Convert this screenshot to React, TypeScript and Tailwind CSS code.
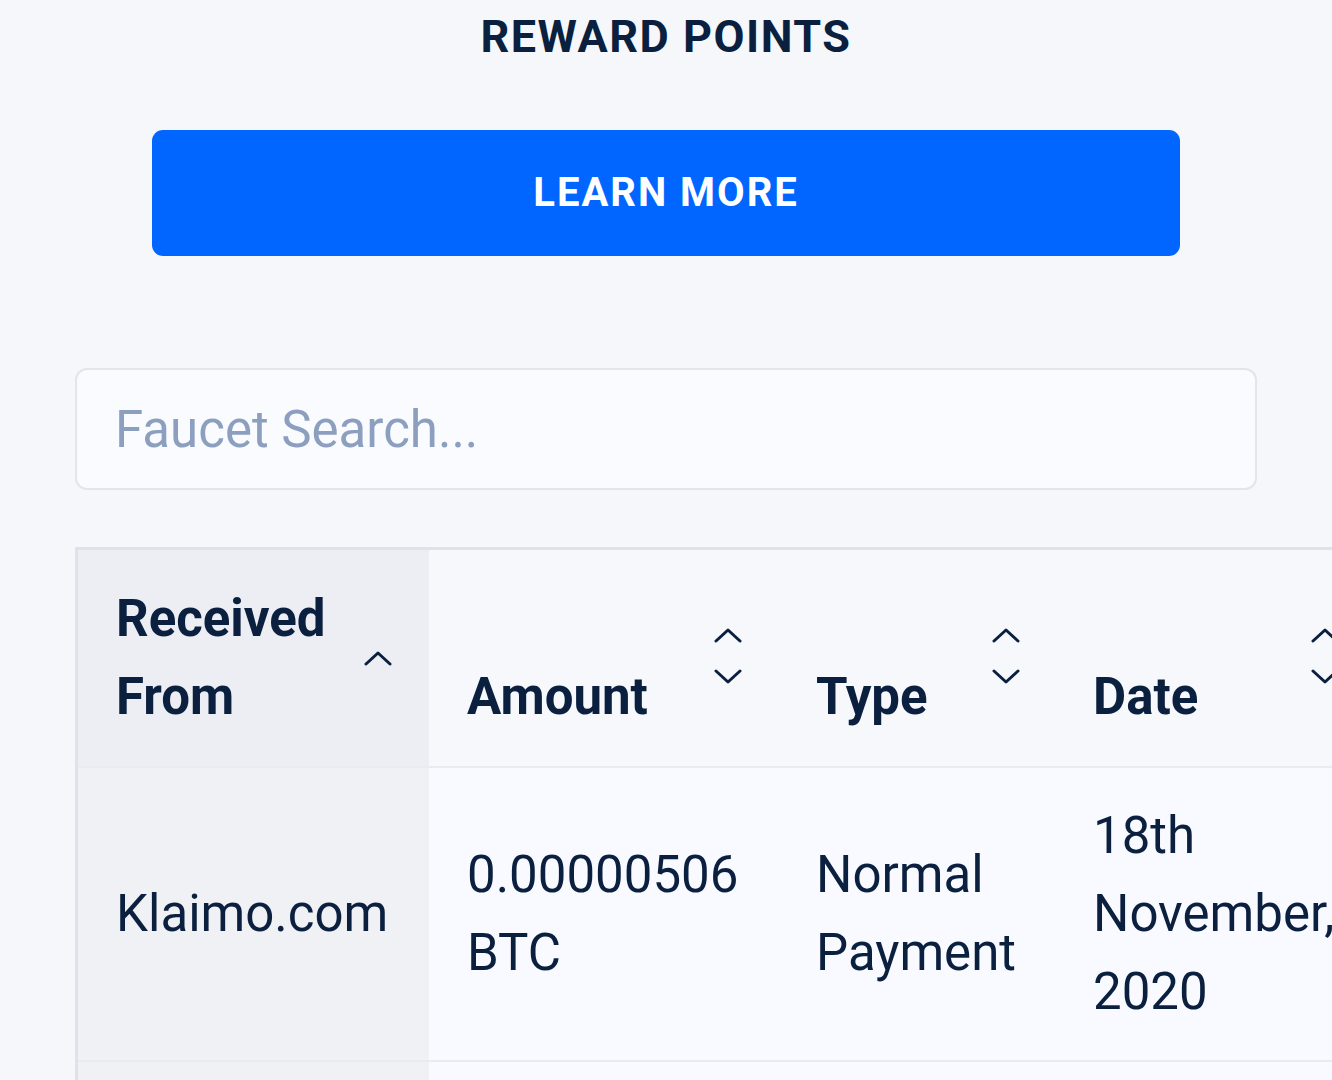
import React from 'react';

// Sortable column headers of the faucet table
const columns = [
  { key: 'from', label: 'Received From', width: 'w-[351px]', pr: 'pr-[37px]', sorted: true },
  { key: 'amount', label: 'Amount', width: 'w-[349px]', pr: 'pr-[36px]', sorted: false },
  { key: 'type', label: 'Type', width: 'w-[277px]', pr: 'pr-[35px]', sorted: false },
  { key: 'date', label: 'Date', width: 'w-[320px]', pr: 'pr-[36px]', sorted: false },
];

const rows = [
  { id: 1, from: 'Klaimo.com', amount: '0.00000506 BTC', type: 'Normal Payment', date: '18th November, 2020' },
  { id: 2, from: 'Klaimo.com', amount: '0.00000498 BTC', type: 'Normal Payment', date: '17th November, 2020' },
];

const ChevronUp = () => (
  <svg width="28" height="16" viewBox="0 0 28 16" fill="none" stroke="currentColor" strokeWidth={3} strokeLinecap="round" strokeLinejoin="round">
    <path d="M2 14L14 3l12 11" />
  </svg>
);

const ChevronDown = () => (
  <svg width="28" height="16" viewBox="0 0 28 16" fill="none" stroke="currentColor" strokeWidth={3} strokeLinecap="round" strokeLinejoin="round">
    <path d="M2 2l12 11L26 2" />
  </svg>
);

const SortIcon = ({ sorted }: { sorted: boolean }) =>
  sorted ? (
    <span className="flex self-center text-[#0b1f3f]">
      <ChevronUp />
    </span>
  ) : (
    <span className="-mt-[4px] flex flex-col self-center gap-[26px] text-[#0b1f3f]">
      <ChevronUp />
      <ChevronDown />
    </span>
  );

export default function App() {
  return (
    <div className="min-h-[1080px] h-[1080px] overflow-hidden bg-[#f5f7fb] font-['Roboto',sans-serif] text-[#0b1f3f]">
      <div className="px-[75px]">
        <h2 className="mt-[14px] text-center text-[45px] leading-[46px] font-bold tracking-[1.5px] text-[#0b1f3f]">
          REWARD POINTS
        </h2>

        <div className="mt-[70px] px-[77px]">
          <button className="flex h-[126px] w-full items-center justify-center rounded-[11px] bg-[#0066ff] text-[40px] font-bold tracking-[2px] text-white">
            LEARN MORE
          </button>
        </div>

        <input
          type="text"
          placeholder="Faucet Search..."
          className="mt-[112px] block h-[122px] w-full rounded-[12px] border-2 border-[#e1e5ec] bg-[#f9fbfe] px-[38px] text-[51px] text-[#0b1f3f] placeholder:text-[#8c9fbf] outline-none"
        />

        <div className="mt-[57px] w-max border-l-[3px] border-t-[3px] border-[#dde2eb]">
          <table className="table-fixed w-[1297px] border-separate border-spacing-0">
            <colgroup>
              {columns.map((col) => (
                <col key={col.key} className={col.width} />
              ))}
            </colgroup>
            <thead>
              <tr>
                {columns.map((col) => (
                  <th
                    key={col.key}
                    className={`${col.pr} pl-[38px] py-[30px] text-left align-middle border-b-2 border-[#e8ebf1] ${
                      col.sorted ? 'bg-[#eceef3]' : 'bg-[#f6f8fc]'
                    }`}
                  >
                    <div className="flex h-[156px] items-end justify-between">
                      <span className="text-[51px] leading-[78px] font-bold">{col.label}</span>
                      <SortIcon sorted={col.sorted} />
                    </div>
                  </th>
                ))}
              </tr>
            </thead>
            <tbody>
              {rows.map((row) => (
                <tr key={row.id}>
                  <td className="h-[294px] pl-[38px] pr-[37px] align-middle text-[51px] leading-[78px] bg-[#eff1f5] border-b-2 border-[#e8ebf1]">
                    {row.from}
                  </td>
                  <td className="pl-[38px] pr-[36px] align-middle text-[51px] leading-[78px] bg-[#f8faff] border-b-2 border-[#e8ebf1]">
                    {row.amount}
                  </td>
                  <td className="pl-[38px] pr-[35px] align-middle text-[51px] leading-[78px] bg-[#f8faff] border-b-2 border-[#e8ebf1]">
                    {row.type}
                  </td>
                  <td className="pl-[38px] pr-[36px] align-middle text-[51px] leading-[78px] bg-[#f8faff] border-b-2 border-[#e8ebf1]">
                    {row.date}
                  </td>
                </tr>
              ))}
            </tbody>
          </table>
        </div>
      </div>
    </div>
  );
}
